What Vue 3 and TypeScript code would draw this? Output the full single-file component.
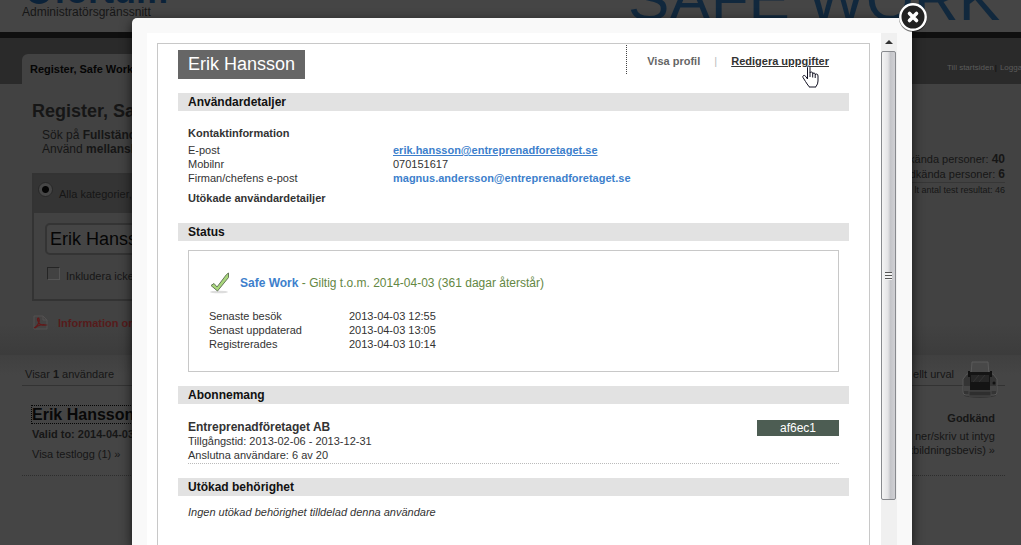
<script setup lang="ts">
import { ref } from 'vue'

interface Row {
  label: string
  value: string
}

const searchName = ref('Erik Hansson')
const includeInactive = ref(false)
const category = ref('all')

const visits: Row[] = [
  { label: 'Senaste besök', value: '2013-04-03 12:55' },
  { label: 'Senast uppdaterad', value: '2013-04-03 13:05' },
  { label: 'Registrerades', value: '2013-04-03 10:14' },
]
</script>

<template>
  <div class="page">
    <header class="masthead">
      <div class="brand">
        <span class="logo"><i class="logo-mark"></i>fortum</span>
        <span class="tagline">Administratörsgränssnitt</span>
      </div>
      <span class="product">SAFE WORK</span>
    </header>

    <nav class="navbar">
      <a class="tab" href="#">Register, Safe Work</a>
      <div class="toplinks">
        <a href="#">Till startsiden</a><span class="bar">|</span><a href="#">Logga</a>
      </div>
    </nav>

    <main class="search">
      <div class="search-left">
        <h1>Register, Safe Work</h1>
        <p class="intro">Sök på <b>Fullständigt</b><br />Använd <b>mellanslag</b></p>
        <form class="panel" @submit.prevent>
          <div class="panel-head">
            <input id="cat" v-model="category" class="radio" type="radio" name="cat" value="all" />
            <label for="cat">Alla kategorier,</label>
          </div>
          <div class="panel-body">
            <input v-model="searchName" class="name-input" type="text" aria-label="Namn" />
            <div class="include">
              <input id="inc" v-model="includeInactive" class="check" type="checkbox" />
              <label for="inc">Inkludera icke</label>
            </div>
          </div>
        </form>
        <a class="info" href="#">
          <svg width="15" height="15" viewBox="0 0 15 15">
            <path d="M1 1h9l4 4v9H1z" fill="#444242" stroke="#525050" />
            <path d="M10 1v4h4" fill="none" stroke="#525050" />
            <path d="M1 13c3-1 6-6 5-9-1-2-2 0-1 2 1 3 4 5 8 4-3-1-8 0-11 3" fill="none" stroke="#621818" stroke-width="1.2" />
          </svg>
          <span>Information om</span>
        </a>
      </div>
      <div class="totals">
        <div class="total">kända personer: <b>40</b></div>
        <div class="total">dkända personer: <b>6</b></div>
        <div class="tests">lt antal test resultat: 46</div>
      </div>
    </main>

    <section class="results">
      <div class="results-bar">
        <span>Visar <b>1</b> användare</span>
        <span class="print">
          <span>ellt urval</span>
          <svg width="38" height="38" viewBox="0 0 38 38">
            <ellipse cx="19" cy="34" rx="16" ry="3" fill="#353535" />
            <path d="M11 1h16l1 13H10z" fill="#484848" stroke="#5a5a5a" />
            <path d="M6 13h26l4 5v13q0 3-3 3H5q-3 0-3-3V18z" fill="#343434" stroke="#565656" />
            <path d="M9 11h20v18H9z" fill="#141414" />
            <path d="M10 14h18v7H10z" fill="#262626" />
            <path d="M12 21l6-7M18 21l6-7" stroke="#343434" />
            <path d="M8 10v6M30 10v6" stroke="#111111" stroke-width="2" />
            <path d="M3 25h6v5H3zM29 25h6v5h-6z" fill="#454545" />
            <path d="M8 30h22v5H8z" fill="#2e2e2e" stroke="#484848" />
            <circle cx="33" cy="22" r="1.5" fill="#111111" />
          </svg>
        </span>
      </div>
      <div class="result">
        <div>
          <a class="result-name" href="#">Erik Hansson</a>
          <div class="valid">Valid to: 2014-04-03</div>
          <a class="log" href="#">Visa testlogg (1) »</a>
        </div>
        <div class="result-right">
          <b>Godkänd</b>
          <a href="#">ner/skriv ut intyg<br />tbildningsbevis) »</a>
        </div>
      </div>
    </section>
  </div>

  <div class="overlay">
    <div class="modal" role="dialog" aria-label="Erik Hansson">
      <button class="close" type="button" aria-label="Stäng">
        <svg width="32" height="32" viewBox="0 0 32 32">
          <circle cx="16" cy="17" r="14" fill="#000000" opacity="0.5" />
          <circle cx="16" cy="16" r="12.7" fill="#222222" stroke="#ffffff" stroke-width="2.4" />
          <path d="M12.5 12.5l7 7M19.5 12.5l-7 7" stroke="#ffffff" stroke-width="3.6" stroke-linecap="round" />
        </svg>
      </button>
      <div class="viewport">
        <div class="frame">
          <div class="profile-head">
            <h2>Erik Hansson</h2>
            <div class="actions">
              <a class="action" href="#">Visa profil</a>
              <span class="divider">|</span>
              <a class="action active" href="#">Redigera uppgifter
                <svg class="cursor" width="18" height="23" viewBox="0 0 18 23">
                  <path d="M5.500 14V2.500q0-1.500 1.300-1.500T8 2.500V8q0-1 1.300-1t1.400 1.200V9q0-1 1.200-1t1.300 1.200V10q.2-1 1.300-1 1.500 0 1.500 2v5q0 3-2 5.500v.500H7v-.500Q5 19 3.500 16.500L1 12.500q-.5-1.500.5-2 1.200-.5 2.300 1z" fill="#ffffff" stroke="#111122" />
                  <path d="M8 8v4M10.700 9v3.500M13.200 10v3" stroke="#111122" fill="none" />
                </svg>
              </a>
            </div>
          </div>

          <h3>Användardetaljer</h3>
          <div class="block details">
            <h4>Kontaktinformation</h4>
            <dl class="contact">
              <dt>E-post</dt>
              <dd><a class="mail hovered" href="#">erik.hansson@entreprenadforetaget.se</a></dd>
              <dt>Mobilnr</dt>
              <dd>070151617</dd>
              <dt>Firman/chefens e-post</dt>
              <dd><a class="mail" href="#">magnus.andersson@entreprenadforetaget.se</a></dd>
            </dl>
            <h4>Utökade användardetailjer</h4>
          </div>

          <h3>Status</h3>
          <div class="status">
            <div class="status-line">
              <svg width="21" height="22" viewBox="0 0 21 22">
                <ellipse cx="10" cy="20" rx="9" ry="1.300" fill="#dddddd" />
                <path d="M2 13.500l3-2 3 3.500L17.500 2.500l2-1.500v4.500L8.500 19z" fill="#a9d77c" stroke="#66775a" stroke-linejoin="round" />
              </svg>
              <span><a class="mail" href="#">Safe Work</a> - Giltig t.o.m. 2014-04-03 (361 dagar återstår)</span>
            </div>
            <dl class="visits">
              <template v-for="row in visits" :key="row.label">
                <dt>{{ row.label }}</dt>
                <dd>{{ row.value }}</dd>
              </template>
            </dl>
          </div>

          <h3>Abonnemang</h3>
          <div class="subscription">
            <div>
              <div class="company">Entreprenadföretaget AB</div>
              <div>Tillgångstid: 2013-02-06 - 2013-12-31</div>
              <div>Anslutna användare: 6 av 20</div>
            </div>
            <span class="code">af6ec1</span>
          </div>

          <h3>Utökad behörighet</h3>
          <p class="empty">Ingen utökad behörighet tilldelad denna användare</p>
        </div>
        <div class="scrollbar">
          <span class="arrow"></span>
          <span class="thumb"><i class="grip"></i></span>
        </div>
      </div>
    </div>
  </div>
</template>

<style>
html,
body {
  margin: 0;
  overflow: hidden;
  background: #424242;
}
</style>

<style scoped>
.page,
.overlay {
  font-family: "Liberation Sans", Arial, sans-serif;
  font-size: 11px;
  line-height: 14px;
}
.page *,
.overlay * {
  box-sizing: border-box;
}
.page {
  height: 100vh;
  overflow: hidden;
  background: #454545;
  color: #161616;
}
a {
  color: inherit;
  text-decoration: none;
}
.masthead {
  display: flex;
  justify-content: space-between;
  align-items: flex-end;
  height: 38px;
  padding: 0 21px 0 22px;
  overflow: hidden;
  border-bottom: 6px solid #0f0f0f;
  background: #454545;
}
.brand {
  display: flex;
  flex: none;
  flex-direction: column;
  padding-bottom: 12px;
}
.logo {
  display: flex;
  align-items: center;
  gap: 2px;
  padding-left: 4px;
  color: #0b2239;
  font-size: 36px;
  font-weight: bold;
  line-height: 26px;
}
.logo-mark {
  width: 26px;
  height: 26px;
  border: 6px solid #0b2239;
  border-radius: 50%;
}
.tagline {
  font-size: 12px;
  line-height: 16px;
}
.product {
  flex: none;
  padding-bottom: 6px;
  color: #11283d;
  font-size: 62px;
  line-height: 54px;
}
.navbar {
  display: flex;
  justify-content: space-between;
  align-items: flex-end;
  height: 46px;
  padding-left: 22px;
  background: #2a2a2a;
}
.tab {
  height: 30px;
  width: 180px;
  padding-left: 8px;
  border-radius: 6px 6px 0 0;
  background: #424242;
  color: #050505;
  font-weight: bold;
  line-height: 30px;
}
.toplinks {
  width: 74px;
  height: 24px;
  overflow: hidden;
  color: #5c5c5c;
  font-size: 8px;
  line-height: 16px;
  white-space: nowrap;
}
.bar {
  margin: 0 3px 0 1px;
  color: #0c0c0c;
}
.search {
  display: flex;
  justify-content: space-between;
  height: 271px;
  padding: 16px 16px 0 32px;
  background: linear-gradient(#424242 240px, #3c3c3c 270px);
}
.search-left {
  width: 420px;
}
h1 {
  margin: 0;
  font-size: 18px;
  line-height: 22px;
}
.intro {
  margin: 6px 0 0 10px;
  font-size: 12px;
  line-height: 14px;
}
.panel {
  margin-top: 17px;
  border: 2px solid #333333;
}
.panel-head {
  display: flex;
  align-items: center;
  gap: 6px;
  height: 38px;
  padding-left: 4px;
  background: #343434;
}
.radio {
  appearance: none;
  width: 15px;
  height: 15px;
  margin: 0 0 10px;
  border: 1px solid #282828;
  border-radius: 50%;
  background: radial-gradient(circle, #050505 3px, #464646 4px);
}
.panel-body {
  display: flex;
  flex-direction: column;
  gap: 12px;
  padding: 10px 11px 15px;
}
.name-input {
  width: 100%;
  height: 32px;
  padding: 0 3px;
  border: 2px solid #343434;
  border-radius: 5px;
  outline: none;
  background: #454545;
  color: #050505;
  font-family: inherit;
  font-size: 18px;
}
.include {
  display: flex;
  align-items: center;
  gap: 6px;
  padding-left: 2px;
}
.check {
  appearance: none;
  width: 13px;
  height: 13px;
  margin: 0 0 4px;
  border: 1px solid #555555;
  border-top-color: #252525;
  border-left-color: #252525;
}
.info {
  display: flex;
  align-items: center;
  gap: 10px;
  margin-top: 14px;
  padding-left: 1px;
  color: #561b1b;
  font-weight: bold;
}
.totals {
  padding-top: 52px;
  text-align: right;
  white-space: nowrap;
}
.total {
  height: 15px;
  line-height: 15px;
}
.total b {
  font-size: 12px;
}
.tests {
  border-top: 1px solid #363636;
  font-size: 9px;
}
.results {
  padding: 6px 16px 0 22px;
  background: linear-gradient(#404040, #454545 20px);
}
.results-bar {
  display: flex;
  justify-content: space-between;
  height: 25px;
  padding: 6px 6px 0 3px;
  border-bottom: 1px solid #333333;
}
.print {
  display: flex;
  gap: 7px;
}
.print svg {
  margin-top: -6px;
}
.result {
  display: flex;
  justify-content: space-between;
  height: 90px;
  padding: 20px 10px 0;
  border-bottom: 1px dotted #2d2d2d;
}
.result-name {
  display: inline-block;
  outline: 1px dotted #050505;
  color: #080808;
  font-size: 16px;
  font-weight: bold;
  line-height: 17px;
}
.valid {
  margin-top: 4px;
  font-weight: bold;
}
.log {
  display: block;
  margin-top: 6px;
}
.result-right {
  display: flex;
  flex-direction: column;
  gap: 4px;
  padding-top: 5px;
  text-align: right;
}

.overlay {
  position: fixed;
  inset: 0;
  display: flex;
  padding: 18px 109px 0 132px;
  overflow: hidden;
  color: #333333;
}
.modal {
  position: relative;
  flex: 1;
  min-width: 0;
  padding: 15px 15px 0;
  border-radius: 5px 5px 0 0;
  background: #f9f9f9;
  box-shadow: 0 4px 12px rgba(0, 0, 0, 0.7);
}
.close {
  position: absolute;
  top: -17px;
  right: -17px;
  width: 32px;
  height: 32px;
  padding: 0;
  border: 0;
  background: none;
}
.close svg {
  display: block;
}
.viewport {
  display: flex;
  height: 100%;
  background: #ffffff;
}
.frame {
  flex: 1;
  min-width: 0;
  margin: 10px 11px 0 10px;
  padding: 1px 20px 0;
  border: 1px solid #c8c8c8;
  border-bottom: 0;
}
.profile-head {
  display: flex;
  justify-content: space-between;
  height: 48px;
}
h2 {
  height: 29px;
  margin: 5px 0 0;
  padding: 0 10px;
  background: #666666;
  color: #ffffff;
  font-size: 18px;
  font-weight: normal;
  line-height: 28px;
}
.actions {
  display: flex;
  height: 29px;
  padding: 9px 20px 0;
  border-left: 1px dotted #444444;
  font-weight: bold;
}
.action {
  color: #666666;
}
.active {
  position: relative;
  color: #333333;
  text-decoration: underline;
}
.divider {
  width: 31px;
  color: #bbbbbb;
  font-weight: normal;
  text-align: center;
}
.cursor {
  position: absolute;
  top: 11px;
  right: 9px;
}
h3 {
  height: 18px;
  margin: 0;
  padding-left: 10px;
  background: #e2e2e2;
  color: #111111;
  font-size: 12px;
  line-height: 18px;
}
h4 {
  margin: 0;
  font-size: 11px;
}
.details {
  height: 112px;
  padding: 15px 10px 0;
}
dl {
  display: grid;
  margin: 0;
}
dd {
  margin: 0;
}
.contact {
  grid-template-columns: 205px 1fr;
  margin: 3px 0 6px;
}
.mail {
  color: #3d7fcc;
  font-weight: bold;
}
.hovered {
  text-decoration: underline;
}
.status {
  height: 122px;
  margin: 9px 10px 14px;
  padding: 21px 20px 0;
  border: 1px solid #c8c8c8;
}
.status-line {
  display: flex;
  align-items: center;
  gap: 10px;
  color: #648743;
  font-size: 12px;
}
.visits {
  grid-template-columns: 140px 1fr;
  margin-top: 15px;
}
.subscription {
  display: flex;
  justify-content: space-between;
  height: 60px;
  margin: 0 10px 14px;
  padding-top: 16px;
  border-bottom: 1px dotted #bbbbbb;
}
.company {
  font-size: 12px;
  font-weight: bold;
}
.code {
  width: 82px;
  height: 16px;
  background: #4d5d53;
  color: #ffffff;
  font-size: 12px;
  line-height: 16px;
  text-align: center;
}
.empty {
  margin: 9px 10px;
  font-style: italic;
}
.scrollbar {
  display: flex;
  flex-direction: column;
  width: 16px;
  padding: 0 1px 45px 0;
  background: #f0f0f0;
}
.arrow {
  align-self: center;
  height: 18px;
  padding-top: 7px;
}
.arrow::before {
  display: block;
  border: 4px solid transparent;
  border-top: 0;
  border-bottom-color: #333333;
  content: "";
}
.thumb {
  display: flex;
  flex: 1;
  align-items: center;
  justify-content: center;
  border: 1px solid #888a8e;
  border-radius: 2px;
  background: linear-gradient(90deg, #f4f4f4, #e4e4e6 45%, #c4c5c9 65%, #cfcfd3);
}
.grip {
  width: 7px;
  height: 8px;
  background: repeating-linear-gradient(#555555 0 1px, #f4f4f4 1px 3px);
}
</style>
